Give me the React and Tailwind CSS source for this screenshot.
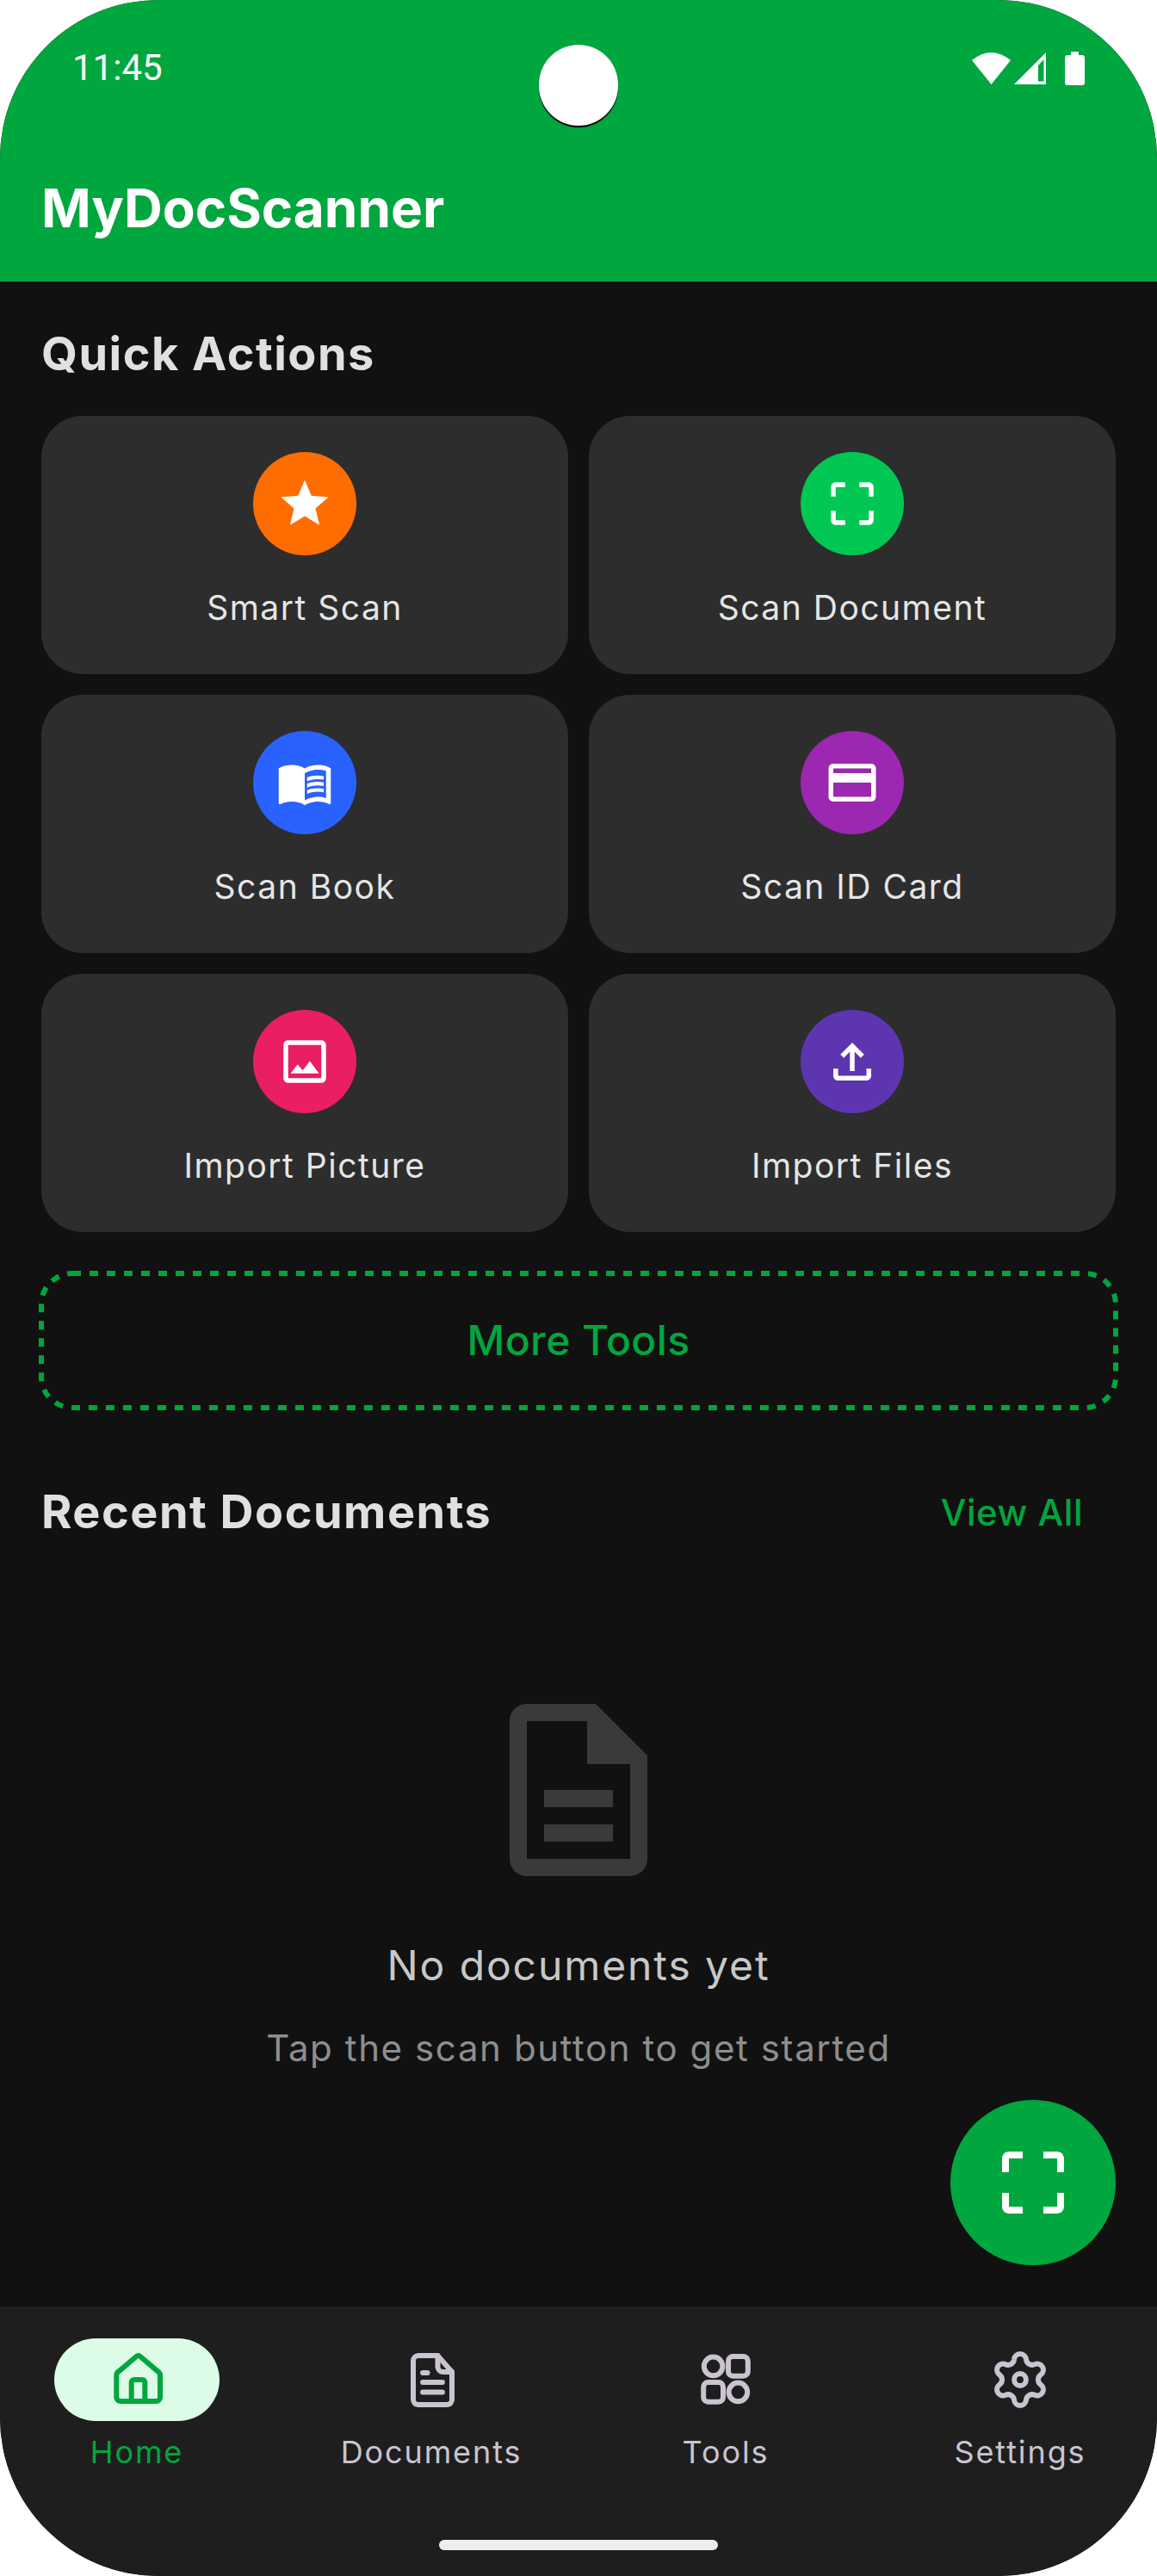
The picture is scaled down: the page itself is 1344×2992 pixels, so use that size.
import React from 'react';
import {
  MdStar,
  MdCropFree,
  MdMenuBook,
  MdCreditCard,
  MdOutlineImage,
  MdOutlineFileUpload,
  MdOutlineDescription,
} from 'react-icons/md';

const actions = [
  { label: 'Smart Scan', Icon: MdStar, color: 'bg-[#ff6d00]' },
  { label: 'Scan Document', Icon: MdCropFree, color: 'bg-[#00c853]' },
  { label: 'Scan Book', Icon: MdMenuBook, color: 'bg-[#2962ff]' },
  { label: 'Scan ID Card', Icon: MdCreditCard, color: 'bg-[#9c27b0]' },
  { label: 'Import Picture', Icon: MdOutlineImage, color: 'bg-[#e91e63]' },
  { label: 'Import Files', Icon: MdOutlineFileUpload, color: 'bg-[#5e35b1]' },
];

function HomeIcon() {
  return (
    <svg width="72" height="72" viewBox="0 0 24 24" fill="none" stroke="#00a63e" strokeWidth="2" strokeLinejoin="round">
      <path d="M5.6 20.3a1.5 1.5 0 0 1-1.5-1.5V10a1 1 0 0 1 .3-.7L11.8 3a1 1 0 0 1 1.5 0l7.4 6.3a1 1 0 0 1 .3.7v8.8a1.5 1.5 0 0 1-1.5 1.5z" />
      <path d="M9.9 20.3V13a1 1 0 0 1 1-1h3.2a1 1 0 0 1 1 1v7.3" />
    </svg>
  );
}

function DocIcon() {
  return (
    <svg width="72" height="72" viewBox="0 0 24 24" fill="none" stroke="#cac4d0" strokeWidth="2" strokeLinecap="round" strokeLinejoin="round">
      <path d="M7 2.7h7.5L20 9v10.700a2 2 0 0 1-2 2H7a2 2 0 0 1-2-2v-15a2 2 0 0 1 2-2z" />
      <path d="M14.5 2.7V7a2 2 0 0 0 2 2H20" />
      <path d="M8.7 9.3h1.8M8.7 13h7.6M8.7 16.8h7.6" />
    </svg>
  );
}

function ToolsIcon() {
  return (
    <svg width="72" height="72" viewBox="0 0 24 24" fill="none" stroke="#cac4d0" strokeWidth="2">
      <circle cx="7.2" cy="6.8" r="3.6" />
      <rect x="13" y="3" width="7.6" height="7.6" rx="1.8" />
      <rect x="3.4" y="13" width="7.6" height="7.6" rx="1.8" />
      <circle cx="16.8" cy="16.8" r="3.6" />
    </svg>
  );
}

function GearIcon() {
  return (
    <svg width="72" height="72" viewBox="0 0 24 24" fill="none" stroke="#cac4d0" strokeWidth="2" strokeLinejoin="round">
      <path d="M9.671 4.136a2.34 2.34 0 0 1 4.659 0 2.34 2.34 0 0 0 3.319 1.915 2.34 2.34 0 0 1 2.33 4.033 2.34 2.34 0 0 0 0 3.831 2.34 2.34 0 0 1-2.33 4.033 2.34 2.34 0 0 0-3.319 1.915 2.34 2.34 0 0 1-4.659 0 2.34 2.34 0 0 0-3.32-1.915 2.34 2.34 0 0 1-2.33-4.033 2.34 2.34 0 0 0 0-3.831A2.34 2.34 0 0 1 6.35 6.051a2.34 2.34 0 0 0 3.32-1.915" />
      <circle cx="12" cy="12" r="2.3" />
    </svg>
  );
}

const navItems = [
  { label: 'Home', Icon: HomeIcon, active: true },
  { label: 'Documents', Icon: DocIcon },
  { label: 'Tools', Icon: ToolsIcon },
  { label: 'Settings', Icon: GearIcon },
];

function StatusIcons() {
  return (
    <div className="flex items-center">
      <svg width="45" height="37" viewBox="0 0 45 37" fill="#fff">
        <path d="M0 9Q22.5-9 45 9L22.5 37z" />
      </svg>
      <svg className="ml-1" width="37" height="37" viewBox="0 0 37 37" fill="#fff">
        <path fillRule="evenodd" d="M37 0v37H0zM28 15v18.5h6.5V8z" />
      </svg>
      <svg className="ml-[22px]" width="23" height="39" viewBox="0 0 23 39" fill="#fff">
        <path d="M7 0h9v4h4a3 3 0 0 1 3 3v29a3 3 0 0 1-3 3H3a3 3 0 0 1-3-3V7a3 3 0 0 1 3-3h4z" />
      </svg>
    </div>
  );
}

function ActionCard({ label, Icon, color }) {
  return (
    <div className="h-[300px] rounded-[48px] bg-[#2d2d2d] flex flex-col items-center pt-[42px]">
      <div className={`w-[120px] h-[120px] rounded-full flex items-center justify-center ${color}`}>
        <Icon size={66} color="#fff" />
      </div>
      <p className="mt-[31px] text-[39px] leading-[60px] font-normal tracking-[1.5px] text-[#e5e5e5]">{label}</p>
    </div>
  );
}

export default function App() {
  return (
    <div className="w-[1344px] h-[2992px] bg-white" style={{ fontFamily: 'Inter, sans-serif' }}>
      <div className="relative w-full h-full rounded-[184px] overflow-hidden bg-[#111111] flex flex-col">
        <header className="h-[327px] shrink-0 bg-[#00a63e] flex flex-col">
          <div className="flex items-center justify-between pl-[84px] pr-[84px] pt-[56px]">
            <span className="text-[42px] leading-[46px] text-white font-['Roboto',sans-serif]">11:45</span>
            <StatusIcons />
          </div>
          <h1 className="ml-12 mt-[98px] text-[62px] leading-[84px] font-bold text-white">MyDocScanner</h1>
        </header>

        {/* camera cutout */}
        <div className="absolute top-[52px] left-[626px] w-[92px] h-[94px] rounded-full bg-white shadow-[0_2px_1px_#000]" />

        <main className="relative flex-1 px-12 pt-12">
          <h2 className="text-[54px] leading-[72px] font-bold tracking-[1.5px] text-[#e0e0e0]">Quick Actions</h2>
          <div className="mt-9 grid grid-cols-2 gap-6">
            {actions.map((a) => (
              <ActionCard key={a.label} {...a} />
            ))}
          </div>

          <button className="relative mt-12 w-full h-[156px] flex items-center justify-center text-[48px] font-medium tracking-[0.4px] text-[#00a63e]">
            <svg className="absolute inset-0 overflow-visible" width="1248" height="156" fill="none">
              <rect width="1248" height="156" rx="36" stroke="#00a63e" strokeWidth="6" strokeDasharray="10 10" />
            </svg>
            More Tools
          </button>

          <div className="mt-[85px] flex items-center justify-between">
            <h2 className="text-[54px] leading-[72px] font-bold tracking-[1.5px] text-[#e0e0e0]">Recent Documents</h2>
            <span className="mr-[38px] text-[42px] font-medium tracking-[0.5px] text-[#00a63e]">View All</span>
          </div>

          <div className="mt-[167px] flex flex-col items-center">
            <MdOutlineDescription size={240} color="#3a3a3c" />
            <p className="mt-[52px] text-[48px] leading-[64px] font-normal tracking-[1.9px] text-[#c8c8c8]">No documents yet</p>
            <p className="mt-[36px] text-[42px] leading-[56px] tracking-[1.6px] text-[#8e8e8e]">Tap the scan button to get started</p>
          </div>

          <div className="absolute right-12 bottom-[48px] w-[192px] h-[192px] rounded-full bg-[#00a63e] flex items-center justify-center">
            <MdCropFree size={96} color="#fff" />
          </div>
        </main>

        <nav className="h-[313px] shrink-0 bg-[#1e1e1e] flex flex-col">
          <div className="flex justify-between px-[63px] pt-[37px]">
            {navItems.map(({ label, Icon, active }) => (
              <div key={label} className="w-[192px] flex flex-col items-center">
                <div className={`w-[192px] h-[96px] rounded-full flex items-center justify-center ${active ? 'bg-[#dcfce7]' : ''}`}>
                  <Icon />
                </div>
                <span className={`mt-3 text-[36px] leading-[48px] font-normal tracking-[1.9px] ${active ? 'text-[#00a63e]' : 'text-[#cac4d0]'}`}>
                  {label}
                </span>
              </div>
            ))}
          </div>
          <div className="mt-[78px] mx-auto w-[324px] h-3 rounded-full bg-[#eeeeee]" />
        </nav>
      </div>
    </div>
  );
}
